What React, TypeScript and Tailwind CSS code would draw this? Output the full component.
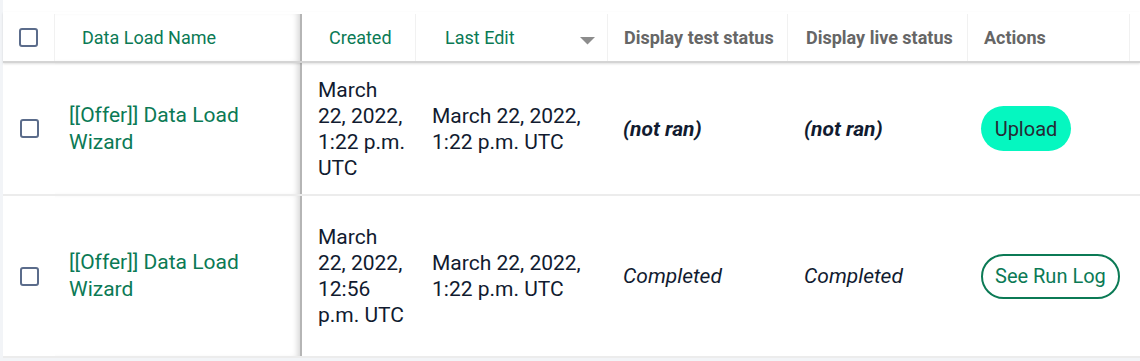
import type { ReactNode } from 'react';

const font = { fontFamily: 'Roboto, "Liberation Sans", sans-serif' };

type Row = {
  name: string;
  created: string;
  edited: string;
  test: string;
  live: string;
  ran: boolean;
  height: string;
};

const rows: Row[] = [
  {
    name: '[[Offer]] Data Load Wizard',
    created: 'March 22, 2022, 1:22 p.m. UTC',
    edited: 'March 22, 2022, 1:22 p.m. UTC',
    test: '(not ran)',
    live: '(not ran)',
    ran: false,
    height: 'h-[133px]',
  },
  {
    name: '[[Offer]] Data Load Wizard',
    created: 'March 22, 2022, 12:56 p.m. UTC',
    edited: 'March 22, 2022, 1:22 p.m. UTC',
    test: 'Completed',
    live: 'Completed',
    ran: true,
    height: 'h-[162px]',
  },
];

function Checkbox() {
  return <span className="block h-[19px] w-[19px] rounded-[3px] border-2 border-[#5b6c8b] bg-white" />;
}

function HeadCell({ w, children, sep = true }: { w: string; children?: ReactNode; sep?: boolean }) {
  return (
    <div className={`${w} flex h-full shrink-0 items-center ${sep ? 'border-r border-[#f1f1f1]' : ''}`}>
      {children}
    </div>
  );
}

export default function App() {
  return (
    <div className="h-[361px] w-[1140px] overflow-hidden bg-[#f2f4f7] pl-[3px]" style={font}>
      <div className="bg-white pt-3">
        {/* header */}
        <div className="relative z-10 flex h-[51px] border-b-2 border-[#d4d4d4] bg-white pt-[2px] text-[18px] shadow-[0_1px_2px_rgba(0,0,0,0.12)]">
          <HeadCell w="w-[52px]">
            <div className="flex w-full justify-center">
              <Checkbox />
            </div>
          </HeadCell>
          <div className="flex h-full w-[247px] shrink-0 items-center border-r-2 border-[#b5b5b5] pl-[27px] shadow-[inset_-6px_0_6px_-4px_rgba(0,0,0,0.18)]">
            <span className="text-[#0b7a55]">Data Load Name</span>
          </div>
          <HeadCell w="w-[114px]">
            <span className="pl-[27px] text-[#0b7a55]">Created</span>
          </HeadCell>
          <HeadCell w="w-[192px]">
            <div className="flex w-full items-center justify-between pl-[29px] pr-[12px]">
              <span className="text-[#0b7a55]">Last Edit</span>
              <svg width="15" height="8" viewBox="0 0 15 8" className="mt-[6px]">
                <path d="M0 0 H15 L7.5 7.5 Z" fill="#8c8c8c" />
              </svg>
            </div>
          </HeadCell>
          <HeadCell w="w-[180px]">
            <span className="pl-4 font-bold text-[#666666]">Display test status</span>
          </HeadCell>
          <HeadCell w="w-[180px]">
            <span className="pl-[18px] font-bold text-[#666666]">Display live status</span>
          </HeadCell>
          <HeadCell w="w-[162px]">
            <span className="pl-4 font-bold text-[#666666]">Actions</span>
          </HeadCell>
          <div className="flex-1" />
        </div>

        {/* rows */}
        {rows.map((r, i) => (
          <div key={i} className={`flex ${r.height} border-b-2 border-[#ececec] text-[21px] leading-[26px] text-[#111b30]`}>
            <div className="flex w-[52px] shrink-0 items-center justify-center">
              <Checkbox />
            </div>
            <div className="flex w-[247px] shrink-0 items-center border-r-2 border-[#b5b5b5] pl-[14px] pr-[14px] shadow-[inset_-6px_0_6px_-4px_rgba(0,0,0,0.18)]">
              <a className="leading-[27px] text-[#0b7a55]">{r.name}</a>
            </div>
            <div className="flex w-[114px] shrink-0 items-center pl-4 pr-[9px]">
              <span>{r.created}</span>
            </div>
            <div className="flex w-[192px] shrink-0 items-center pl-4 pr-3">
              <span>{r.edited}</span>
            </div>
            <div className="flex w-[180px] shrink-0 items-center pl-[15px]">
              <span className={r.ran ? 'italic' : 'font-bold italic'}>{r.test}</span>
            </div>
            <div className="flex w-[180px] shrink-0 items-center pl-4">
              <span className={r.ran ? 'italic' : 'font-bold italic'}>{r.live}</span>
            </div>
            <div className="flex w-[162px] shrink-0 items-center pl-[13px]">
              {r.ran ? (
                <button
                  type="button"
                  className="h-[45px] rounded-full border-2 border-[#0b7a55] px-[12px] text-[20px] text-[#0b7a55]"
                >
                  See Run Log
                </button>
              ) : (
                <button
                  type="button"
                  className="h-[45px] w-[90px] rounded-full bg-[#05f7c0] text-[20px] text-[#262a35]"
                >
                  Upload
                </button>
              )}
            </div>
            <div className="flex-1" />
          </div>
        ))}
      </div>
    </div>
  );
}
